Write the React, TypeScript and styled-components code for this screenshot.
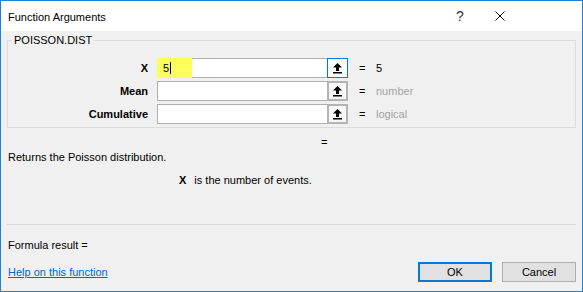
import React from 'react';
import styled, { createGlobalStyle } from 'styled-components';

interface Arg {
  name: string;
  value?: string;
  hint: string;
  active?: boolean;
}

const args: Arg[] = [
  { name: 'X', value: '5', hint: '5', active: true },
  { name: 'Mean', hint: 'number' },
  { name: 'Cumulative', hint: 'logical' },
];

const GlobalStyle = createGlobalStyle`
  html, body {
    margin: 0;
    padding: 0;
    background: #ffffff;
  }
  body {
    font-family: "Liberation Sans", Arial, sans-serif;
    font-size: 11px;
    color: #000;
  }
`;

const Window = styled.div`
  width: 583px;
  height: 292px;
  box-sizing: border-box;
  border: 1px solid #1883d7;
  display: flex;
  flex-direction: column;
  background: #f0f0f0;
`;

const TitleBar = styled.div`
  height: 30px;
  background: #ffffff;
  display: flex;
  align-items: center;
  padding-left: 7px;
  padding-right: 62px;
`;

const Title = styled.div`
  flex: 1;
  padding-top: 1px;
`;

const TitleButton = styled.div`
  width: 40px;
  height: 30px;
  display: flex;
  align-items: center;
  justify-content: center;
  font-size: 14px;
  color: #333;
`;

const Body = styled.div`
  flex: 1;
  display: flex;
  flex-direction: column;
  padding: 0 6px;
`;

const Group = styled.fieldset`
  margin: 3px 0 0;
  padding: 12px 0 3px;
  border: 1px solid #dcdcdc;
  display: flex;
  flex-direction: column;
  gap: 3px;
  min-width: 0;
`;

const Legend = styled.legend`
  margin-left: 4px;
  padding: 0 2px;
  line-height: 12px;
`;

const ArgRow = styled.div`
  display: flex;
  align-items: center;
  height: 20px;
`;

const ArgLabel = styled.div`
  width: 140px;
  margin-right: 9px;
  font-weight: bold;
  text-align: right;
`;

const InputBox = styled.div`
  position: relative;
  width: 170px;
  height: 20px;
  box-sizing: border-box;
  border: 1px solid #b0b0b0;
  border-right: none;
  background: #fff;
  display: flex;
  align-items: center;
  padding-left: 5px;
`;

const Marker = styled.span`
  position: absolute;
  left: -1px;
  top: -1px;
  bottom: -1px;
  width: 35px;
  background: #fdfd5e;
`;

const InputText = styled.span`
  position: relative;
  display: flex;
  align-items: center;
`;

const Caret = styled.span`
  display: inline-block;
  width: 1px;
  height: 12px;
  background: #000;
  margin-left: 1px;
`;

const RefButton = styled.div<{ $active?: boolean }>`
  width: 21px;
  height: 20px;
  box-sizing: border-box;
  border: ${(p) => (p.$active ? '1px solid #0078d7' : '2px solid #b4b4b4')};
  background: ${(p) => (p.$active ? '#fdfdfd' : '#f7f7f7')};
  display: flex;
  align-items: center;
  justify-content: center;
`;

const Equals = styled.div`
  width: 17px;
  margin-left: 11px;
`;

const Hint = styled.div<{ $muted?: boolean }>`
  color: ${(p) => (p.$muted ? '#a3a3a3' : '#000')};
`;

const ResultEquals = styled.div`
  margin: 8px 0 0 314px;
  height: 12px;
  line-height: 12px;
`;

const Description = styled.div`
  margin: 2px 0 0 1px;
  line-height: 14px;
`;

const ArgHelp = styled.div`
  margin: 9px 0 0 172px;
  display: flex;
  gap: 8px;
  line-height: 14px;
`;

const Bold = styled.span`
  font-weight: bold;
`;

const Separator = styled.div`
  margin-top: 37px;
  height: 1px;
  background: #d8d8d8;
`;

const FormulaResult = styled.div`
  margin: 13px 0 0 1px;
  line-height: 14px;
`;

const Footer = styled.div`
  display: flex;
  align-items: center;
  margin-top: 10px;
  padding-left: 1px;
`;

const HelpLink = styled.a`
  color: #0066cc;
  text-decoration: underline;
  flex: 1;
`;

const Button = styled.div<{ $primary?: boolean }>`
  width: 74px;
  height: 20px;
  box-sizing: border-box;
  border: ${(p) => (p.$primary ? '2px solid #0078d7' : '1px solid #adadad')};
  background: #e1e1e1;
  display: flex;
  align-items: center;
  justify-content: center;
  margin-left: 10px;
`;

const UpArrow = () => (
  <svg width="9" height="11" viewBox="0 0 9 11">
    <polygon points="4.5,0 0,4.5 3,4.5 3,8 6,8 6,4.5 9,4.5" fill="#000" />
    <rect x="0" y="9" width="9" height="1.5" fill="#000" />
  </svg>
);

const CloseIcon = () => (
  <svg width="10" height="10" viewBox="0 0 10 10">
    <path d="M0.5 0.5 L9.5 9.5 M9.5 0.5 L0.5 9.5" stroke="#111" strokeWidth="1" />
  </svg>
);

export default function App() {
  return (
    <>
      <GlobalStyle />
      <Window>
        <TitleBar>
          <Title>Function Arguments</Title>
          <TitleButton>?</TitleButton>
          <TitleButton>
            <CloseIcon />
          </TitleButton>
        </TitleBar>
        <Body>
          <Group>
            <Legend>POISSON.DIST</Legend>
            {args.map((a) => (
              <ArgRow key={a.name}>
                <ArgLabel>{a.name}</ArgLabel>
                <InputBox>
                  {a.active && <Marker />}
                  {a.value && (
                    <InputText>
                      {a.value}
                      <Caret />
                    </InputText>
                  )}
                </InputBox>
                <RefButton $active={a.active}>
                  <UpArrow />
                </RefButton>
                <Equals>=</Equals>
                <Hint $muted={!a.value}>{a.hint}</Hint>
              </ArgRow>
            ))}
          </Group>
          <ResultEquals>=</ResultEquals>
          <Description>Returns the Poisson distribution.</Description>
          <ArgHelp>
            <Bold>X</Bold>
            <span>is the number of events.</span>
          </ArgHelp>
          <Separator />
          <FormulaResult>Formula result =</FormulaResult>
          <Footer>
            <HelpLink href="#">Help on this function</HelpLink>
            <Button $primary>OK</Button>
            <Button>Cancel</Button>
          </Footer>
        </Body>
      </Window>
    </>
  );
}
